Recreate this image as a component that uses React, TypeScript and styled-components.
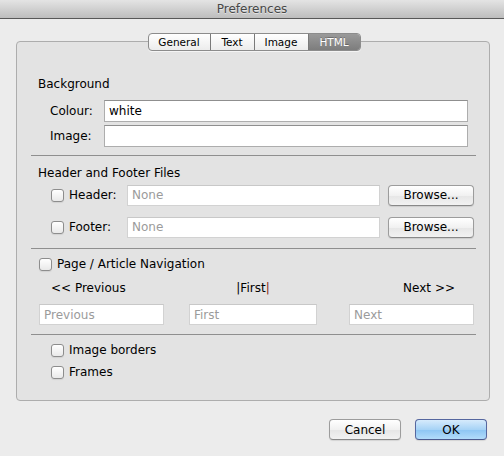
import React from "react";
import styled, { createGlobalStyle } from "styled-components";

const GlobalStyle = createGlobalStyle`
  html, body {
    margin: 0;
    padding: 0;
    background: #ececec;
  }

  body {
    font-family: "DejaVu Sans", Verdana, sans-serif;
    font-size: 12px;
    color: #000;
  }
`;

const Window = styled.div`
  width: 504px;
  height: 456px;
  display: flex;
  flex-direction: column;
  background: #ececec;
  overflow: hidden;
`;

const TitleBar = styled.div`
  height: 18px;
  border-bottom: 1px solid #585858;
  background: linear-gradient(#e4e4e4, #bdbdbd);
  display: flex;
  align-items: center;
  justify-content: center;
  font-size: 12px;
  color: #474747;
  text-shadow: 0 1px 0 rgba(255, 255, 255, 0.5);
`;

const Body = styled.div`
  display: flex;
  flex-direction: column;
  padding: 22px 14px 0 16px;
`;

const GroupBox = styled.div`
  box-sizing: border-box;
  height: 360px;
  border: 1px solid #adadad;
  border-radius: 4px;
  background: #e3e3e3;
  display: flex;
  flex-direction: column;
  padding: 0 21px;
`;

const TabBar = styled.div`
  align-self: center;
  display: flex;
  height: 18px;
  margin-top: -9px;
  margin-left: 2px;
  box-sizing: border-box;
  border: 1px solid #8c8c8c;
  border-radius: 4px;
  background: linear-gradient(#ffffff, #ececec);
  overflow: hidden;
  box-shadow: 0 1px 0 rgba(255, 255, 255, 0.6);
`;

const Tab = styled.div<{ $active?: boolean; $width: number }>`
  box-sizing: border-box;
  width: ${(p) => p.$width}px;
  display: flex;
  align-items: center;
  justify-content: center;
  font-size: 10.5px;
  color: ${(p) => (p.$active ? "#fff" : "#000")};
  background: ${(p) =>
    p.$active ? "linear-gradient(#9a9a9a, #7d7d7d)" : "transparent"};
  text-shadow: ${(p) => (p.$active ? "0 -1px 0 rgba(0,0,0,0.25)" : "none")};

  & + & {
    border-left: 1px solid ${(p) => (p.$active ? "#7a7a7a" : "#c9c9c9")};
  }
`;

const Heading = styled.div<{ $top: number }>`
  margin-top: ${(p) => p.$top}px;
  line-height: 16px;
  height: 16px;
`;

const FieldGrid = styled.div`
  display: grid;
  grid-template-columns: 54px 364px;
  row-gap: 3px;
  margin: 8px 0 0 12px;
  align-items: center;
`;

const Label = styled.span<{ $width?: number }>`
  ${(p) => (p.$width ? `width: ${p.$width}px; flex-shrink: 0;` : "")}
  line-height: 16px;
  white-space: nowrap;
`;

const TextField = styled.input<{ $width?: number; $soft?: boolean }>`
  box-sizing: border-box;
  ${(p) => (p.$width ? `width: ${p.$width}px;` : "width: 100%;")}
  height: ${(p) => (p.$soft ? 21 : 22)}px;
  margin: 0;
  padding: 0 4px;
  flex-shrink: 0;
  font-family: inherit;
  font-size: 12px;
  color: #000;
  background: #fff;
  border: 1px solid ${(p) => (p.$soft ? "#d2d2d2" : "#adadad")};
  border-top-color: ${(p) => (p.$soft ? "#c8c8c8" : "#8f8f8f")};
  border-radius: 0;
  outline: none;

  &::placeholder {
    color: #9b9b9b;
  }
`;

const Separator = styled.hr<{ $top: number }>`
  height: 0;
  border: 0;
  border-top: 1px solid #8f8f8f;
  margin: ${(p) => p.$top}px -8px 0 -7px;
`;

const Row = styled.div<{ $top: number; $indent: number; $height?: number }>`
  display: flex;
  align-items: center;
  margin-top: ${(p) => p.$top}px;
  margin-left: ${(p) => p.$indent}px;
  height: ${(p) => p.$height ?? 16}px;
`;

const CheckBox = styled.span`
  box-sizing: border-box;
  width: 13px;
  height: 13px;
  flex-shrink: 0;
  margin-right: 5px;
  border: 1px solid #8d8d8d;
  border-radius: 3px;
  background: linear-gradient(#ffffff, #e9e9e9);
  box-shadow: 0 1px 1px rgba(0, 0, 0, 0.08);
`;

const PushButton = styled.button<{ $width: number; $primary?: boolean; $gap?: number }>`
  box-sizing: border-box;
  width: ${(p) => p.$width}px;
  height: 21px;
  margin: 0 0 0 ${(p) => p.$gap ?? 0}px;
  padding: 0;
  flex-shrink: 0;
  font-family: inherit;
  font-size: 12px;
  color: #000;
  border-radius: 4px;
  border: 1px solid ${(p) => (p.$primary ? "#56679f" : "#9c9c9c")};
  border-bottom-color: ${(p) => (p.$primary ? "#4a5a8e" : "#888")};
  background: ${(p) =>
    p.$primary
      ? "linear-gradient(#d6ebfc, #a7d3f6 50%, #8cc5f3 51%, #b2dcfa)"
      : "linear-gradient(#ffffff, #f1f1f1 50%, #e6e6e6 51%, #f2f2f2)"};
  box-shadow: 0 1px 1px rgba(0, 0, 0, 0.1);
`;

const NavRow = styled.div<{ $top: number }>`
  display: flex;
  align-items: center;
  margin-top: ${(p) => p.$top}px;
  margin-left: 1px;
`;

const NavCell = styled.div<{ $width: number; $gap: number; $align: string; $pad?: number }>`
  width: ${(p) => p.$width}px;
  margin-left: ${(p) => p.$gap}px;
  flex-shrink: 0;
  display: flex;
  justify-content: ${(p) => p.$align};
  padding: 0 ${(p) => p.$pad ?? 0}px;
  box-sizing: border-box;
  line-height: 16px;
`;

const Caret = styled.span`
  color: #8a2a10;
`;

const Footer = styled.div`
  display: flex;
  justify-content: flex-end;
  gap: 14px;
  margin-top: 18px;
  padding-right: 3px;
`;

const navCells = [
  { width: 125, gap: 0 },
  { width: 128, gap: 25 },
  { width: 125, gap: 32 },
];

export default function App() {
  return (
    <>
      <GlobalStyle />
      <Window>
        <TitleBar>Preferences</TitleBar>
        <Body>
          <GroupBox>
            <TabBar>
              <Tab $width={61}>General</Tab>
              <Tab $width={44}>Text</Tab>
              <Tab $width={54}>Image</Tab>
              <Tab $width={52} $active>
                HTML
              </Tab>
            </TabBar>

            <Heading $top={25}>Background</Heading>
            <FieldGrid>
              <Label>Colour:</Label>
              <TextField defaultValue="white" />
              <Label>Image:</Label>
              <TextField defaultValue="" />
            </FieldGrid>

            <Separator $top={8} />

            <Heading $top={9}>Header and Footer Files</Heading>
            <Row $top={3} $indent={13} $height={22}>
              <CheckBox />
              <Label $width={58}>Header:</Label>
              <TextField $soft $width={253} placeholder="None" />
              <PushButton $width={86} $gap={8}>
                Browse...
              </PushButton>
            </Row>
            <Row $top={10} $indent={13} $height={22}>
              <CheckBox />
              <Label $width={58}>Footer:</Label>
              <TextField $soft $width={253} placeholder="None" />
              <PushButton $width={86} $gap={8}>
                Browse...
              </PushButton>
            </Row>

            <Separator $top={10} />

            <Row $top={7} $indent={1}>
              <CheckBox />
              <Label>Page / Article Navigation</Label>
            </Row>
            <NavRow $top={8}>
              <NavCell $width={125} $gap={0} $align="flex-start" $pad={12}>
                &lt;&lt; Previous
              </NavCell>
              <NavCell $width={128} $gap={25} $align="center">
                <span>
                  |First<Caret>|</Caret>
                </span>
              </NavCell>
              <NavCell $width={125} $gap={32} $align="flex-end" $pad={19}>
                Next &gt;&gt;
              </NavCell>
            </NavRow>
            <NavRow $top={8}>
              {["Previous", "First", "Next"].map((ph, i) => (
                <NavCell
                  key={ph}
                  $width={navCells[i].width}
                  $gap={navCells[i].gap}
                  $align="stretch"
                >
                  <TextField $soft placeholder={ph} />
                </NavCell>
              ))}
            </NavRow>

            <Separator $top={9} />

            <Row $top={7} $indent={13}>
              <CheckBox />
              <Label>Image borders</Label>
            </Row>
            <Row $top={6} $indent={13}>
              <CheckBox />
              <Label>Frames</Label>
            </Row>
          </GroupBox>

          <Footer>
            <PushButton $width={72}>Cancel</PushButton>
            <PushButton $width={72} $primary>
              OK
            </PushButton>
          </Footer>
        </Body>
      </Window>
    </>
  );
}
